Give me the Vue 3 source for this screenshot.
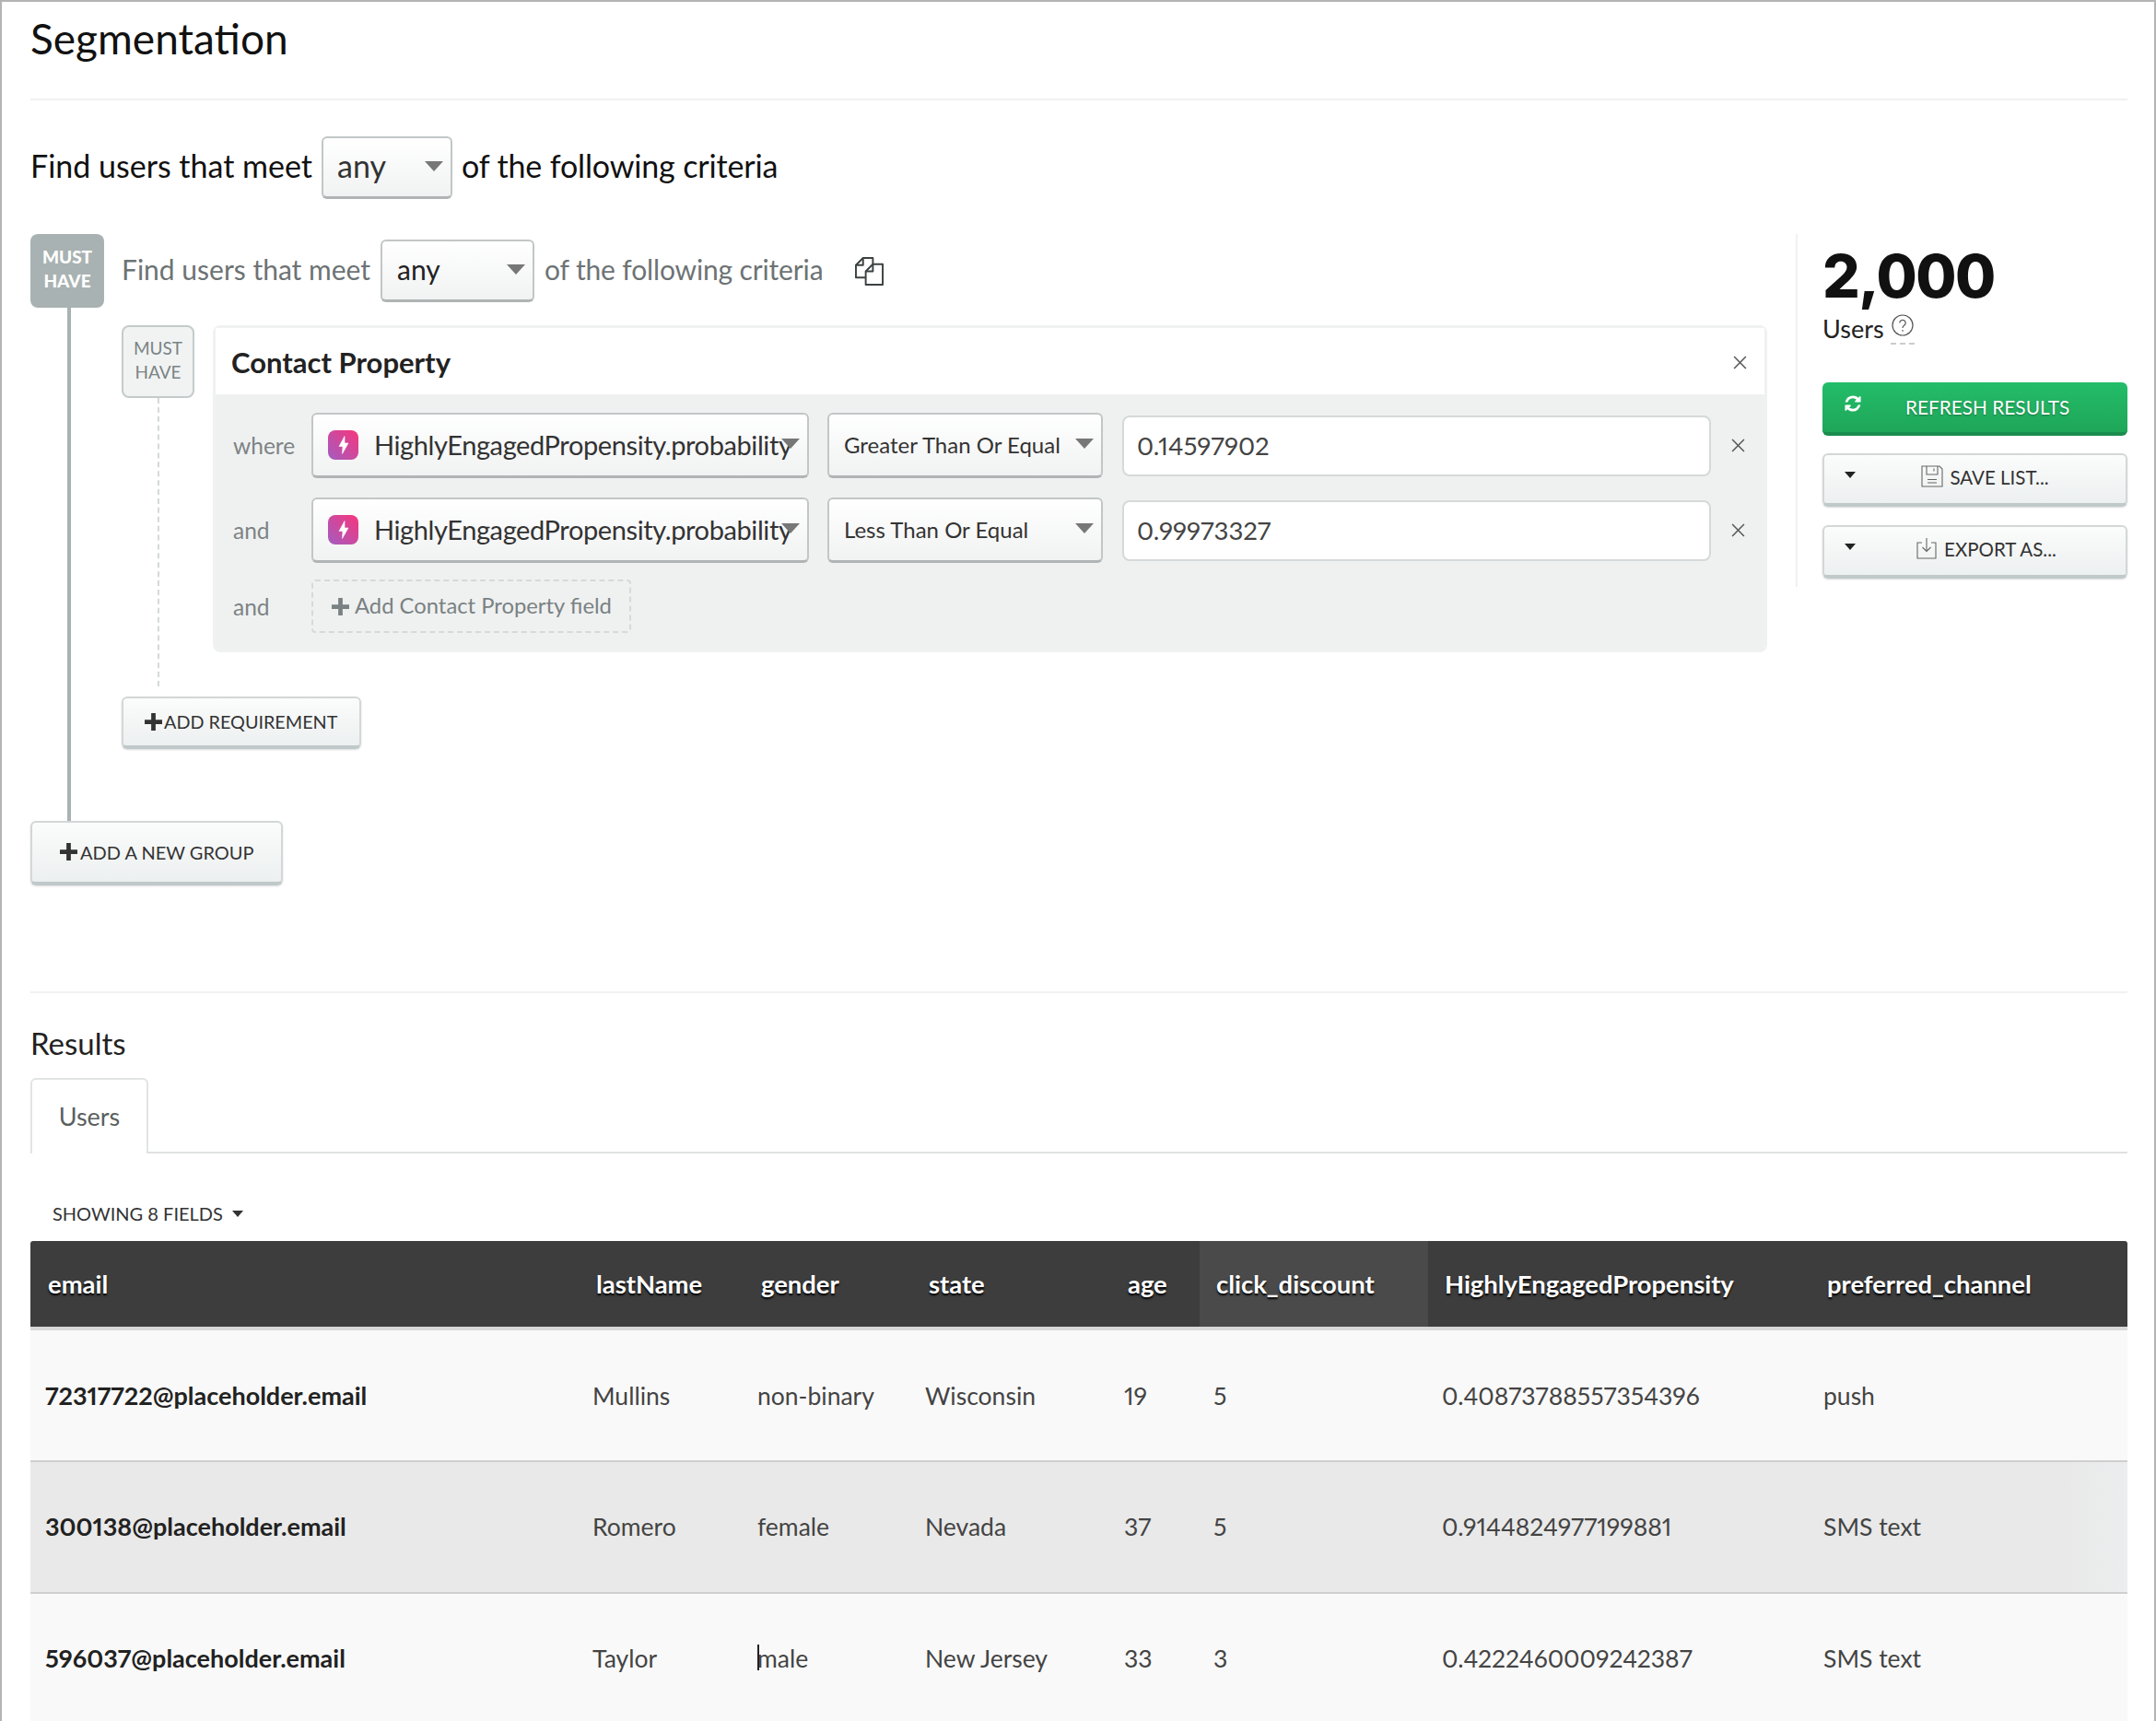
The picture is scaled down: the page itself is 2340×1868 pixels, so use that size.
<script setup>
const conditions = [
  { label: 'where', op: 'Greater Than Or Equal', value: '0.14597902' },
  { label: 'and', op: 'Less Than Or Equal', value: '0.99973327' }
]
const columns = ['email', 'lastName', 'gender', 'state', 'age', 'click_discount', 'HighlyEngagedPropensity', 'preferred_channel']
const rows = [
  ['72317722@placeholder.email', 'Mullins', 'non-binary', 'Wisconsin', '19', '5', '0.40873788557354396', 'push'],
  ['300138@placeholder.email', 'Romero', 'female', 'Nevada', '37', '5', '0.9144824977199881', 'SMS text'],
  ['596037@placeholder.email', 'Taylor', 'male', 'New Jersey', '33', '3', '0.4222460009242387', 'SMS text']
]
</script>

<template>
  <div class="page">
    <h1 class="title">Segmentation</h1>

    <div class="meet">
      <span>Find users that meet</span>
      <div class="select any-top"><span>any</span><i class="arrow"></i></div>
      <span class="tight">of the following criteria</span>
    </div>

    <div class="builder">
      <div class="main">
        <div class="group">
          <div class="rail">
            <div class="badge-solid">MUST<br />HAVE</div>
            <div class="rail-line"></div>
          </div>
          <div class="group-body">
            <div class="group-head">
              <span>Find users that meet</span>
              <div class="select any-inner"><span>any</span><i class="arrow"></i></div>
              <span class="tight">of the following criteria</span>
              <svg class="copy" viewBox="0 0 32 32" fill="none" stroke="#3c4142" stroke-width="2" stroke-linejoin="round">
                <path d="M12 23H1V9l8-8h11v7" />
                <path d="M9 1v8H1" />
                <path d="M20 8h11v23H12V16z" />
                <path d="M20 8v8h-8" />
              </svg>
            </div>
            <div class="requirement">
              <div class="req-rail">
                <div class="badge-light">MUST<br />HAVE</div>
                <div class="req-line"></div>
              </div>
              <div class="card">
                <div class="card-head">
                  <span>Contact Property</span>
                  <svg class="x" viewBox="0 0 14 14"><path d="M1 1l12 12M13 1L1 13" /></svg>
                </div>
                <div class="card-body">
                  <div v-for="c in conditions" :key="c.value" class="cond">
                    <span class="cond-label">{{ c.label }}</span>
                    <div class="select prop">
                      <span class="prop-icon">
                        <svg viewBox="0 0 12 20" fill="#fff" stroke="#fff" stroke-width="0.600" stroke-linejoin="round"><path d="M7 .500L1 11.500h4L4.500 19.500 11 8H7z" /></svg>
                      </span>
                      <span class="prop-name">HighlyEngagedPropensity.probability</span>
                      <i class="arrow"></i>
                    </div>
                    <div class="select op"><span>{{ c.op }}</span><i class="arrow"></i></div>
                    <div class="value">{{ c.value }}</div>
                    <svg class="x" viewBox="0 0 14 14"><path d="M1 1l12 12M13 1L1 13" /></svg>
                  </div>
                  <div class="cond add-row">
                    <span class="cond-label">and</span>
                    <div class="add-field">
                      <svg class="plus" viewBox="0 0 20 20"><path d="M7.500 0h5v7.500H20v5h-7.500V20h-5v-7.500H0v-5h7.500z" /></svg>
                      <span>Add Contact Property field</span>
                    </div>
                  </div>
                </div>
              </div>
            </div>
            <button class="btn add-req">
              <svg class="plus" viewBox="0 0 20 20"><path d="M7.500 0h5v7.500H20v5h-7.500V20h-5v-7.500H0v-5h7.500z" /></svg>
              <span>ADD REQUIREMENT</span>
            </button>
          </div>
        </div>
        <button class="btn add-group">
          <svg class="plus" viewBox="0 0 20 20"><path d="M7.500 0h5v7.500H20v5h-7.500V20h-5v-7.500H0v-5h7.500z" /></svg>
          <span>ADD A NEW GROUP</span>
        </button>
      </div>

      <aside class="summary">
        <div class="count">2,000</div>
        <div class="users">
          <span>Users</span>
          <span class="help">
            <svg viewBox="0 0 24 24" fill="none" stroke="#555" stroke-width="1.200">
              <circle cx="12" cy="12" r="11" />
              <path d="M8.800 9.500a3.200 3.200 0 1 1 4.800 2.800c-1 .6-1.600 1.200-1.600 2.700" />
              <path d="M12 17v1.800" />
            </svg>
          </span>
        </div>
        <button class="btn-green">
          <svg class="refresh" viewBox="0 0 1792 1792" fill="#fff"><path d="M1639 1056q0 5-1 7-64 268-268 434.500t-478 166.500q-146 0-282.500-55t-243.500-157l-129 129q-19 19-45 19t-45-19-19-45v-448q0-26 19-45t45-19h448q26 0 45 19t19 45-19 45l-137 137q71 66 161 102t187 36q134 0 250-65t186-179q11-17 53-117 8-23 30-23h192q13 0 22.500 9.500t9.500 22.500zm25-800v448q0 26-19 45t-45 19h-448q-26 0-45-19t-19-45 19-45l138-138q-148-137-349-137-134 0-250 65t-186 179q-11 17-53 117-8 23-30 23h-199q-13 0-22.500-9.500t-9.500-22.500v-7q65-268 270-434.500t480-166.500q146 0 284 55.500t245 156.500l130-129q19-19 45-19t45 19 19 45z" /></svg>
          <span>REFRESH RESULTS</span>
        </button>
        <button class="btn side save">
          <i class="mini-caret"></i>
          <svg class="side-icon" viewBox="0 0 24 24" fill="none" stroke="#666" stroke-width="1.100">
            <path d="M1 1h19l3 3v19H1z" />
            <path d="M6 1v9h12V1" />
            <path d="M14 3.500v3" />
            <path d="M7 15.500h10M7 19h10" />
          </svg>
          <span>SAVE LIST...</span>
        </button>
        <button class="btn side export">
          <i class="mini-caret"></i>
          <svg class="side-icon" viewBox="0 0 24 24" fill="none" stroke="#666" stroke-width="1.100">
            <path d="M7 6H2v17h20V6h-5" />
            <path d="M12 1v14M7.500 11l4.500 4.500 4.500-4.500" />
          </svg>
          <span>EXPORT AS...</span>
        </button>
      </aside>
    </div>

    <section class="results">
      <h2 class="results-title">Results</h2>
      <div class="tabs"><div class="tab">Users</div></div>
      <div class="fields">SHOWING 8 FIELDS <i class="small-caret"></i></div>
      <div class="table">
        <div class="tr th">
          <div v-for="(c, i) in columns" :key="c" class="cell" :class="{ sorted: i === 5 }">{{ c }}</div>
        </div>
        <div v-for="(r, ri) in rows" :key="r[0]" class="tr td" :class="{ alt: ri === 1 }">
          <div v-for="(v, i) in r" :key="i" class="cell" :class="{ strong: i === 0 }">
            <i v-if="v === 'male'" class="text-caret"></i>{{ v }}
          </div>
        </div>
      </div>
    </section>
  </div>
</template>

<style scoped>
.page {
  box-sizing: border-box;
  width: 2340px;
  height: 1868px;
  overflow: hidden;
  padding: 0 29px 0 31px;
  border: 2px solid #b4b4b4;
  border-bottom: 0;
  background: #fff;
  font-family: Lato, "Open Sans", sans-serif;
  font-variant-numeric: proportional-nums;
  color: #111;
}
.title {
  box-sizing: border-box;
  height: 107px;
  margin: 0;
  padding-top: 10px;
  border-bottom: 2px solid #f0f1f1;
  font-size: 46px;
  line-height: 60px;
  font-weight: 400;
}
.meet {
  display: flex;
  align-items: center;
  gap: 10px;
  height: 68px;
  margin-top: 39px;
  font-size: 34px;
}
.meet > span {
  padding-bottom: 5px;
}
.tight {
  letter-spacing: -0.150px;
}
.select {
  position: relative;
  box-sizing: border-box;
  display: flex;
  align-items: center;
  border: 2px solid #c2c6c6;
  border-bottom: 3px solid #b0b4b4;
  border-radius: 6px;
  background: linear-gradient(#fff, #f1f2f2);
  color: #333;
}
.arrow {
  position: absolute;
  top: 50%;
  right: 8px;
  margin-top: -7px;
  border-left: 10px solid transparent;
  border-right: 10px solid transparent;
  border-top: 11px solid #777;
}
.any-top {
  width: 142px;
  height: 68px;
  padding-left: 15px;
  font-size: 34px;
}
.any-top > span,
.any-inner > span {
  padding-bottom: 4px;
}
.builder {
  display: flex;
  margin-top: 38px;
}
.main {
  width: 1916px;
}
.group {
  display: flex;
  gap: 19px;
  height: 637px;
}
.rail {
  display: flex;
  flex-direction: column;
  align-items: center;
  width: 80px;
}
.badge-solid {
  box-sizing: border-box;
  flex: none;
  width: 80px;
  height: 80px;
  padding-top: 12px;
  border-radius: 8px;
  background: #a9b2b2;
  color: #fff;
  font-size: 19px;
  font-weight: 900;
  line-height: 26px;
  text-align: center;
}
.rail-line {
  flex: 1;
  width: 4px;
  margin-left: 4px;
  background: #a9b2b2;
}
.group-body {
  flex: 1;
}
.group-head {
  display: flex;
  align-items: center;
  gap: 11px;
  height: 68px;
  margin-top: 6px;
  font-size: 30px;
  color: #6d7374;
}
.group-head > span {
  padding-bottom: 4px;
}
.any-inner {
  width: 167px;
  height: 68px;
  padding-left: 16px;
  font-size: 30px;
  color: #222;
}
.copy {
  width: 31px;
  height: 31px;
  margin-left: 24px;
}
.requirement {
  display: flex;
  gap: 20px;
  height: 392px;
  margin-top: 25px;
}
.req-rail {
  display: flex;
  flex-direction: column;
  align-items: center;
  width: 79px;
}
.badge-light {
  box-sizing: border-box;
  flex: none;
  width: 79px;
  height: 79px;
  padding-top: 10px;
  border: 2px solid #c4cbcb;
  border-radius: 8px;
  background: #f1f3f3;
  color: #7a8484;
  font-size: 19px;
  line-height: 26px;
  text-align: center;
}
.req-line {
  flex: 1;
  border-left: 2px dashed #d5d9d9;
}
.card {
  box-sizing: border-box;
  width: 1687px;
  height: 355px;
  border: 3px solid #f0f2f2;
  border-radius: 8px;
  background: #eff1f1;
}
.card-head {
  box-sizing: border-box;
  display: flex;
  align-items: center;
  justify-content: space-between;
  height: 72px;
  padding: 2px 19px 0 17px;
  background: #fff;
  font-size: 31px;
  font-weight: 700;
  color: #222;
}
.x {
  flex: none;
  width: 15px;
  height: 15px;
  fill: none;
  stroke: #555;
  stroke-width: 1.400;
}
.card-body {
  padding-top: 20px;
}
.cond {
  display: flex;
  align-items: center;
  height: 71px;
  margin-bottom: 21px;
  padding-left: 19px;
}
.cond-label {
  width: 85px;
  font-size: 24.500px;
  color: #7d8384;
}
.prop {
  width: 540px;
  height: 71px;
  padding-left: 16px;
  font-size: 29px;
}
.prop-icon {
  flex: none;
  display: flex;
  align-items: center;
  justify-content: center;
  width: 33px;
  height: 32px;
  border-radius: 8px;
  background: linear-gradient(45deg, #a25dc0, #f8357c);
}
.prop-icon svg {
  width: 12px;
  height: 20px;
}
.prop-name {
  margin-left: 17px;
  padding-bottom: 1px;
  white-space: nowrap;
  letter-spacing: -0.400px;
}
.op {
  width: 299px;
  height: 71px;
  margin-left: 20px;
  padding-left: 16px;
  font-size: 24px;
}
.op > span {
  padding-bottom: 2px;
}
.value {
  box-sizing: border-box;
  display: flex;
  align-items: center;
  width: 639px;
  height: 66px;
  margin-left: 21px;
  padding: 0 0 0 14px;
  border: 2px solid #d6d9d9;
  border-radius: 8px;
  background: #fff;
  font-size: 27.500px;
  color: #444;
}
.cond > .x {
  margin-left: 22px;
}
.add-row {
  height: 58px;
  margin-top: -3px;
  margin-bottom: 0;
}
.add-field {
  box-sizing: border-box;
  display: flex;
  align-items: center;
  gap: 6px;
  width: 347px;
  height: 58px;
  padding-left: 20px;
  border: 2px dashed #d6d9d9;
  border-radius: 4px;
  font-size: 23.800px;
  color: #7a8182;
}
.add-field > span {
  padding-bottom: 2px;
}
.plus {
  flex: none;
  width: 19px;
  height: 19px;
  fill: currentColor;
}
.btn {
  box-sizing: border-box;
  display: flex;
  align-items: center;
  border: 2px solid #d3d7d7;
  border-bottom: 4px solid #c0c9c9;
  border-radius: 6px;
  background: linear-gradient(#fbfcfc, #edf0f0);
  font: inherit;
  color: #333;
  padding: 0;
  box-shadow: 0 1px 2px rgba(0, 0, 0, 0.15);
}
.add-req {
  gap: 2px;
  width: 260px;
  height: 57px;
  margin-top: 11px;
  padding: 0 0 1px 23px;
  font-size: 19.800px;
}
.add-group {
  gap: 3px;
  width: 274px;
  height: 70px;
  padding: 0 0 1px 30px;
  font-size: 20px;
}
.summary {
  box-sizing: border-box;
  width: 360px;
  height: 383px;
  padding-left: 27px;
  border-left: 2px solid #f0f1f1;
}
.count {
  height: 66px;
  margin-top: 13px;
  font-family: Inter, Lato, sans-serif;
  font-size: 64px;
  line-height: 66px;
  font-weight: 800;
  letter-spacing: -1.500px;
  color: #111;
}
.users {
  display: flex;
  align-items: center;
  gap: 7px;
  height: 40px;
  margin-top: 3px;
  font-size: 27px;
  color: #222;
}
.help {
  display: block;
  width: 26px;
  height: 34px;
  border-bottom: 2px dashed #ccc;
  text-align: center;
}
.help svg {
  width: 24px;
  height: 24px;
}
.btn-green {
  position: relative;
  box-sizing: border-box;
  display: flex;
  align-items: center;
  width: 331px;
  height: 58px;
  margin-top: 39px;
  padding: 0 0 2px 90px;
  border: 0;
  border-bottom: 4px solid #1a8c4d;
  border-radius: 6px;
  background: linear-gradient(#23bd69, #1fa659);
  color: #fff;
  font: inherit;
  font-size: 20.800px;
  text-shadow: 0 1px 2px rgba(0, 0, 0, 0.35);
}
.refresh {
  position: absolute;
  left: 23px;
  top: 13px;
  width: 20px;
  height: 20px;
}
.side {
  position: relative;
  justify-content: center;
  gap: 7px;
  width: 331px;
  height: 58px;
  margin-top: 19px;
  padding-bottom: 4px;
  font-size: 20.500px;
}
.side.save {
  padding-left: 22px;
}
.side.export {
  margin-top: 20px;
  padding-left: 24px;
}
.mini-caret {
  position: absolute;
  left: 22px;
  top: 18px;
  border-left: 6px solid transparent;
  border-right: 6px solid transparent;
  border-top: 7px solid #222;
}
.side-icon {
  flex: none;
  width: 24px;
  height: 24px;
  margin-top: -2px;
}
.results {
  margin-top: 115px;
  border-top: 2px solid #f0f1f1;
}
.results-title {
  height: 39px;
  margin: 35px 0 0;
  font-size: 33px;
  line-height: 39px;
  font-weight: 400;
  color: #222;
}
.tabs {
  height: 80px;
  margin-top: 18px;
  border-bottom: 2px solid #dfe1e1;
}
.tab {
  box-sizing: border-box;
  display: flex;
  align-items: center;
  justify-content: center;
  width: 128px;
  height: 82px;
  padding-bottom: 2px;
  border: 2px solid #e2e4e4;
  border-bottom: 0;
  border-radius: 6px 6px 0 0;
  background: #fff;
  font-size: 27px;
  color: #5b5f60;
}
.fields {
  display: flex;
  align-items: center;
  gap: 10px;
  height: 30px;
  margin-top: 50px;
  padding-left: 24px;
  font-size: 20px;
  color: #333;
}
.small-caret {
  border-left: 6px solid transparent;
  border-right: 6px solid transparent;
  border-top: 7px solid #333;
}
.table {
  margin-top: 15px;
}
.tr {
  display: grid;
  grid-template-columns: 597px 179px 182px 215px 96px 248px 416px 343px;
}
.th {
  box-sizing: border-box;
  height: 97px;
  border-bottom: 4px solid #d8d8d8;
  border-radius: 3px 3px 0 0;
  background: #3d3d3d;
  color: #fff;
  font-size: 27.400px;
  font-weight: 700;
  text-shadow: 0 2px 2px #000;
}
.th .cell {
  display: flex;
  align-items: center;
  padding: 0 0 1px 17px;
}
.th .cell:first-child {
  padding-left: 19px;
}
.th .cell:nth-child(5),
.th .cell:nth-child(6),
.th .cell:nth-child(7) {
  padding-left: 18px;
}
.th .sorted {
  background: #4a4a4a;
}
.td {
  box-sizing: border-box;
  height: 143px;
  border-bottom: 2px solid #cfcfcf;
  background: #f9f9f9;
  font-size: 26.500px;
  color: #444;
}
.td.alt {
  background: linear-gradient(90deg, #e9e9e9 97%, #ecedee);
}
.td .cell {
  position: relative;
  display: flex;
  align-items: center;
  padding: 0 0 2px 13px;
}
.th + .td .cell {
  padding-bottom: 0;
}
.td .cell:nth-child(5) {
  padding-left: 14px;
}
.td .cell:nth-child(6),
.td .cell:nth-child(7) {
  padding-left: 15px;
}
.strong {
  font-weight: 700;
  color: #222;
}
.td .strong {
  padding-left: 16px;
  font-size: 27px;
}
.text-caret {
  position: absolute;
  left: 13px;
  top: 55px;
  width: 2px;
  height: 28px;
  background: #222;
}
</style>
